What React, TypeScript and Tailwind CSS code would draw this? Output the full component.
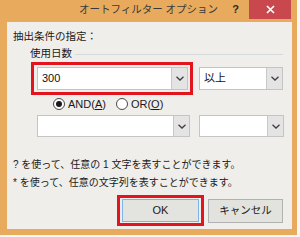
import React from "react";

const font = { fontFamily: '"Liberation Sans", "Noto Sans CJK JP", sans-serif' };

function Chevron() {
  return (
    <svg width="8" height="5" viewBox="0 0 8 5" className="block">
      <polyline points="0.5,0.8 4,4 7.5,0.8" fill="none" stroke="#404040" strokeWidth="1.3" />
    </svg>
  );
}

function Combo({ w, h, text }: { w: string; h: string; text?: string }) {
  return (
    <div className={`${w} ${h} flex bg-white border border-[#c4c4c4]`}>
      <div className="flex-1 flex items-center pl-[4px] text-[11px] text-[#111]">{text}</div>
      <div className="w-[16px] flex items-center justify-center bg-[#e4e4e4] border-l border-[#c8c8c8]">
        <Chevron />
      </div>
    </div>
  );
}

function Radio({ checked }: { checked?: boolean }) {
  return (
    <div className="w-[12px] h-[12px] rounded-full border border-[#4a4a4a] bg-white flex items-center justify-center">
      {checked && <div className="w-[6px] h-[6px] rounded-full bg-[#1a1a1a]" />}
    </div>
  );
}

export default function App() {
  return (
    <div className="w-[300px] h-[237px] bg-[#f7f7f7] flex items-start overflow-hidden" style={font}>
      <div className="w-[297px] h-[235px] bg-[#e8aa5c] flex flex-col">
        {/* title bar */}
        <div className="h-[22px] grid grid-cols-[1fr_auto_1fr] items-start">
          <div />
          <div className="h-[20px] flex items-center text-[10.5px] text-[#3a3a3a] whitespace-nowrap">
            オートフィルター オプション
          </div>
          <div className="flex justify-end items-start pr-[6px]">
            <div className="h-[19px] flex items-center pr-[10px] text-[11px] font-bold text-[#2a2a2a]">?</div>
            <div className="w-[42px] h-[19px] bg-[#c9484e] flex items-center justify-center">
              <svg width="9" height="9" viewBox="0 0 9 9">
                <path d="M1 1 L8 8 M8 1 L1 8" stroke="#ffffff" strokeWidth="1.6" />
              </svg>
            </div>
          </div>
        </div>
        {/* content */}
        <div className="ml-[7px] w-[285px] h-[207px] bg-[#efeeea] flex flex-col pl-[6px] text-[#1a1a1a]">
          <div className="mt-[8px] h-[14px] flex items-center text-[10.5px]">抽出条件の指定：</div>
          <div className="mt-[4px] h-[12px] flex items-center ml-[17px] mr-[9px]">
            <span className="text-[10.5px] whitespace-nowrap">使用日数</span>
            <div className="flex-1 h-px bg-[#d6d9dc] ml-[3px]" />
          </div>
          <div className="mt-[2px] flex items-center ml-[18px]">
            <div className="w-[162px] h-[33px] border-[3px] border-[#e2141e] p-[2px] pl-[3px] flex items-center">
              <Combo w="w-[153px]" h="h-[23px]" text="300" />
            </div>
            <div className="ml-[6px]">
              <Combo w="w-[84px]" h="h-[23px]" text="以上" />
            </div>
          </div>
          <div className="mt-[2px] h-[14px] flex items-center ml-[40px] text-[11px]">
            <Radio checked />
            <span className="ml-[3px]">
              AND(<span className="underline">A</span>)
            </span>
            <div className="ml-[10px]">
              <Radio />
            </div>
            <span className="ml-[3px]">
              OR(<span className="underline">O</span>)
            </span>
          </div>
          <div className="mt-[4px] flex ml-[24px]">
            <Combo w="w-[153px]" h="h-[22px]" />
            <div className="ml-[9px]">
              <Combo w="w-[85px]" h="h-[22px]" />
            </div>
          </div>
          <div className="mt-[20px] h-[14px] flex items-center text-[10px] whitespace-nowrap">
            ? を使って、任意の 1 文字を表すことができます。
          </div>
          <div className="mt-[4px] h-[14px] flex items-center text-[10px] whitespace-nowrap">
            * を使って、任意の文字列を表すことができます。
          </div>
          <div className="mt-[6px] flex items-center ml-[104px]">
            <div className="w-[87px] h-[31px] border-[3px] border-[#e2141e] py-[1px] px-[2px] flex items-center">
              <div className="w-[77px] h-[23px] bg-[#e3e3e0] border border-[#7eb4ea] flex items-center justify-center text-[11px]">
                OK
              </div>
            </div>
            <div className="ml-[4px] w-[75px] h-[24px] bg-[#e2e2df] border border-[#b2b2b2] flex items-center justify-center text-[10.5px]">
              キャンセル
            </div>
          </div>
        </div>
      </div>
    </div>
  );
}
